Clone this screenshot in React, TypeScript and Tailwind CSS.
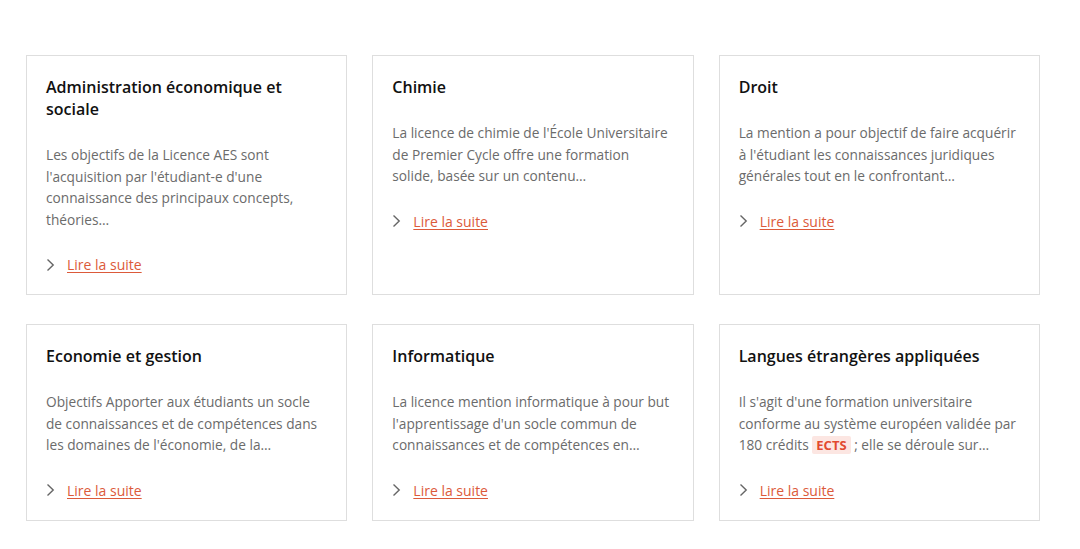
import React from 'react';

type Formation = {
  title: string;
  desc: React.ReactNode;
};

const formations: Formation[] = [
  {
    title: 'Administration économique et sociale',
    desc: "Les objectifs de la Licence AES sont l'acquisition par l'étudiant-e d'une connaissance des principaux concepts, théories…",
  },
  {
    title: 'Chimie',
    desc: "La licence de chimie de l'École Universitaire de Premier Cycle offre une formation solide, basée sur un contenu…",
  },
  {
    title: 'Droit',
    desc: "La mention a pour objectif de faire acquérir à l'étudiant les connaissances juridiques générales tout en le confrontant…",
  },
  {
    title: 'Economie et gestion',
    desc: "Objectifs Apporter aux étudiants un socle de connaissances et de compétences dans les domaines de l'économie, de la…",
  },
  {
    title: 'Informatique',
    desc: "La licence mention informatique à pour but l'apprentissage d'un socle commun de connaissances et de compétences en…",
  },
  {
    title: 'Langues étrangères appliquées',
    desc: (
      <>
        Il s'agit d'une formation universitaire conforme au système européen validée par 180 crédits{' '}
        <span className="bg-[#fce6e2] text-[#e2492f] text-[13px] leading-[18px] font-bold px-[4px] rounded-[2px]">ECTS</span> ; elle se déroule sur…
      </>
    ),
  },
];

const Chevron = () => (
  <svg width="9" height="14" viewBox="0 0 9 14" fill="none" className="shrink-0">
    <path d="M1.5 1.5 L7.2 7 L1.5 12.5" stroke="#666" strokeWidth="1.4" />
  </svg>
);

export default function App() {
  return (
    <div className="min-h-[549px] bg-white font-['Open_Sans',sans-serif] px-[26px] pt-[55px]">
      <div className="grid grid-cols-3 gap-x-[25px] gap-y-[29px] w-[1014px]">
        {formations.map((f) => (
          <div key={f.title} className="border border-[#dedede] pl-[19px] pr-[22px] pt-[20px] pb-[19px] flex flex-col">
            <h3 className="text-[16px] leading-[22px] font-semibold text-[#111]">{f.title}</h3>
            <p className="mt-[24px] text-[13.7px] leading-[21.5px] text-[#6b6b6b]">{f.desc}</p>
            <div className="mt-[24px] flex items-center gap-[12px]">
              <Chevron />
              <a href="#" className="text-[14px] leading-[21px] text-[#dc5a3a] underline underline-offset-2 font-medium">
                Lire la suite
              </a>
            </div>
          </div>
        ))}
      </div>
    </div>
  );
}
